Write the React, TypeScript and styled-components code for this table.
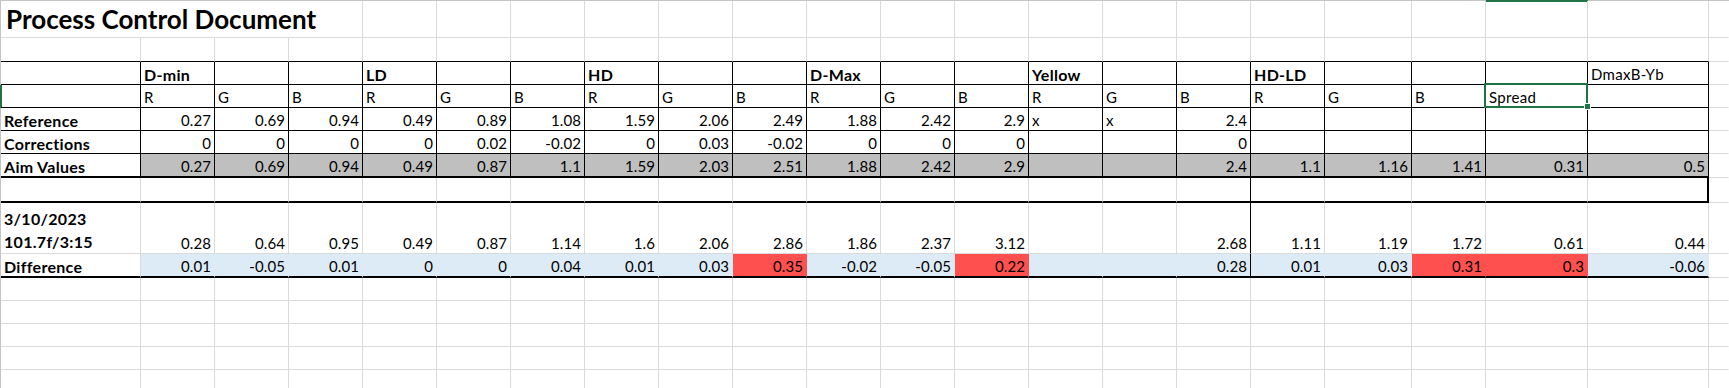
import React from "react";
import styled, { createGlobalStyle, css } from "styled-components";

const GlobalStyle = createGlobalStyle`
  html, body {
    margin: 0;
    padding: 0;
    background: #fff;
    overflow: hidden;
  }
  body {
    font-family: Lato, "Liberation Sans", sans-serif;
    color: #000;
  }
`;

const COLUMNS = "140px repeat(16, 74px) 87px 74px 102px 121px 1fr";

type Line = "grid" | "thin" | "thick" | "clear";

const line = (l: Line) => {
  switch (l) {
    case "thin":
      return "1px solid #000";
    case "thick":
      return "2px solid #000";
    case "clear":
      return "1px solid transparent";
    default:
      return "1px solid #dadada";
  }
};

const Sheet = styled.div`
  display: flex;
  flex-direction: column;
  width: 100%;
  height: 388px;
  border-top: 1px solid #c4c4c4;
  border-left: 1px solid #c4c4c4;
  box-sizing: border-box;
`;

const Row = styled.div<{ $h: number }>`
  display: grid;
  grid-template-columns: ${COLUMNS};
  height: ${(p) => p.$h}px;
  flex-shrink: 0;
`;

const Cell = styled.div<{
  $r: Line;
  $b: Line;
  $num?: boolean;
  $bold?: boolean;
  $fill?: string;
  $selected?: boolean;
  $rowMark?: boolean;
  $colMark?: boolean;
}>`
  box-sizing: border-box;
  min-width: 0;
  display: flex;
  align-items: flex-end;
  justify-content: ${(p) => (p.$num ? "flex-end" : "flex-start")};
  padding: 0 3px 1px 3px;
  font-size: ${(p) => (p.$bold ? 16 : 15)}px;
  letter-spacing: ${(p) => (p.$num && !p.$bold ? 0.1 : 0.3)}px;
  line-height: 17px;
  font-weight: ${(p) => (p.$bold ? 700 : 400)};
  white-space: nowrap;
  background: ${(p) => p.$fill ?? "transparent"};
  border-right: ${(p) => line(p.$r)};
  border-bottom: ${(p) => line(p.$b)};

  ${(p) =>
    p.$rowMark &&
    css`
      box-shadow: -1px 0 0 #217346, inset 1px 0 0 #217346;
    `}

  ${(p) =>
    p.$colMark &&
    css`
      box-shadow: 0 -1px 0 #217346, inset 0 1px 0 #217346;
    `}

  ${(p) =>
    p.$selected &&
    css`
      position: relative;
      z-index: 2;
      &::after {
        content: "";
        position: absolute;
        left: -2px;
        top: -2px;
        right: -1px;
        bottom: -1px;
        border: 2px solid #217346;
        pointer-events: none;
      }
      &::before {
        content: "";
        position: absolute;
        right: -4px;
        bottom: -3px;
        width: 7px;
        height: 7px;
        box-sizing: border-box;
        background: #217346;
        border: 1px solid #fff;
        z-index: 1;
      }
    `}
`;

const TitleCell = styled(Cell)`
  grid-column: span 4;
  font-size: 26px;
  letter-spacing: 0;
  line-height: 31px;
  padding: 0 0 2px 5px;
  font-weight: 700;
`;

const DateLabel = styled(Cell)`
  white-space: pre;
  line-height: 23px;
  padding-bottom: 0;
`;

const GRAY = "#bfbfbf";
const BLUE = "#ddebf7";
const RED = "#ff5050";

const headers = [
  "D-min", "", "", "LD", "", "", "HD", "", "", "D-Max", "", "",
  "Yellow", "", "", "HD-LD", "", "", "", "DmaxB-Yb",
];
const channels = [
  "R", "G", "B", "R", "G", "B", "R", "G", "B", "R", "G", "B",
  "R", "G", "B", "R", "G", "B", "Spread", "",
];
const reference = [
  "0.27", "0.69", "0.94", "0.49", "0.89", "1.08", "1.59", "2.06", "2.49",
  "1.88", "2.42", "2.9", "x", "x", "2.4", "", "", "", "", "",
];
const corrections = [
  "0", "0", "0", "0", "0.02", "-0.02", "0", "0.03", "-0.02",
  "0", "0", "0", "", "", "0", "", "", "", "", "",
];
const aim = [
  "0.27", "0.69", "0.94", "0.49", "0.87", "1.1", "1.59", "2.03", "2.51",
  "1.88", "2.42", "2.9", "", "", "2.4", "1.1", "1.16", "1.41", "0.31", "0.5",
];
const measured = [
  "0.28", "0.64", "0.95", "0.49", "0.87", "1.14", "1.6", "2.06", "2.86",
  "1.86", "2.37", "3.12", "", "", "2.68", "1.11", "1.19", "1.72", "0.61", "0.44",
];
const difference = [
  "0.01", "-0.05", "0.01", "0", "0", "0.04", "0.01", "0.03", "0.35",
  "-0.02", "-0.05", "0.22", "", "", "0.28", "0.01", "0.03", "0.31", "0.3", "-0.06",
];
const outOfSpec = new Set([9, 12, 18, 19]);

const isNum = (v: string) => /^-?[\d.]+$/.test(v);

type Kind = "blank" | "top" | "table" | "aim" | "gap" | "date" | "diff";

// borders per row kind, c = 0..21 (21 is the narrow filler column)
const edges = (kind: Kind, c: number): { r: Line; b: Line } => {
  if (c === 21) return { r: "clear", b: "grid" };
  switch (kind) {
    case "top":
      return { r: "grid", b: "thin" };
    case "table":
      return { r: "thin", b: "thin" };
    case "aim":
      return { r: "thin", b: "thick" };
    case "gap":
      return { r: c === 15 ? "thin" : c === 20 ? "thick" : "grid", b: "thick" };
    case "date":
      return { r: c === 15 ? "thin" : "grid", b: "grid" };
    case "diff":
      return { r: c === 15 ? "thin" : c >= 1 ? "clear" : "grid", b: "thick" };
    default:
      return { r: "grid", b: "grid" };
  }
};

const filler = (kind: Kind) => {
  const e = edges(kind, 21);
  return <Cell $r={e.r} $b={e.b} />;
};

const DataRow = ({
  kind,
  h,
  label,
  values,
  fill,
}: {
  kind: Kind;
  h: number;
  label?: string;
  values: string[];
  fill?: (i: number) => string | undefined;
}) => {
  const l = edges(kind, 0);
  return (
    <Row $h={h}>
      <Cell $r={l.r} $b={l.b} $bold>
        {label}
      </Cell>
      {values.map((v, i) => {
        const e = edges(kind, i + 1);
        return (
          <Cell key={i} $r={e.r} $b={e.b} $num={isNum(v)} $fill={fill?.(i + 1)}>
            {v}
          </Cell>
        );
      })}
      {filler(kind)}
    </Row>
  );
};

const blanks = Array.from({ length: 20 }, () => "");

export default function App() {
  return (
    <>
      <GlobalStyle />
      <Sheet>
        <Row $h={37}>
          <TitleCell $r="grid" $b="grid">
            Process Control Document
          </TitleCell>
          {Array.from({ length: 18 }, (_, i) => (
            <Cell key={i} $r={i === 17 ? "clear" : "grid"} $b="grid" $colMark={i + 4 === 19} />
          ))}
        </Row>
        <DataRow kind="top" h={24} values={blanks} />

        <Row $h={23}>
          <Cell $r="thin" $b="thin" />
          {headers.map((v, i) => (
            <Cell key={i} $r="thin" $b="thin" $bold={i < 19}>
              {v}
            </Cell>
          ))}
          {filler("table")}
        </Row>

        <Row $h={23}>
          <Cell $r="thin" $b="thin" $rowMark />
          {channels.map((v, i) => (
            <Cell key={i} $r="thin" $b="thin" $selected={v === "Spread"}>
              {v}
            </Cell>
          ))}
          {filler("table")}
        </Row>

        <DataRow kind="table" h={23} label="Reference" values={reference} />
        <DataRow kind="table" h={23} label="Corrections" values={corrections} />
        <DataRow kind="aim" h={24} label="Aim Values" values={aim} fill={() => GRAY} />
        <DataRow kind="gap" h={25} values={blanks} />

        <Row $h={51}>
          <DateLabel $r="grid" $b="grid" $bold>
            {"3/10/2023\n101.7f/3:15"}
          </DateLabel>
          {measured.map((v, i) => {
            const e = edges("date", i + 1);
            return (
              <Cell key={i} $r={e.r} $b={e.b} $num>
                {v}
              </Cell>
            );
          })}
          {filler("date")}
        </Row>

        <DataRow
          kind="diff"
          h={24}
          label="Difference"
          values={difference}
          fill={(c) => (outOfSpec.has(c) ? RED : BLUE)}
        />

        {[0, 1, 2, 3, 4].map((k) => (
          <DataRow key={k} kind="blank" h={23} values={blanks} />
        ))}
      </Sheet>
    </>
  );
}
